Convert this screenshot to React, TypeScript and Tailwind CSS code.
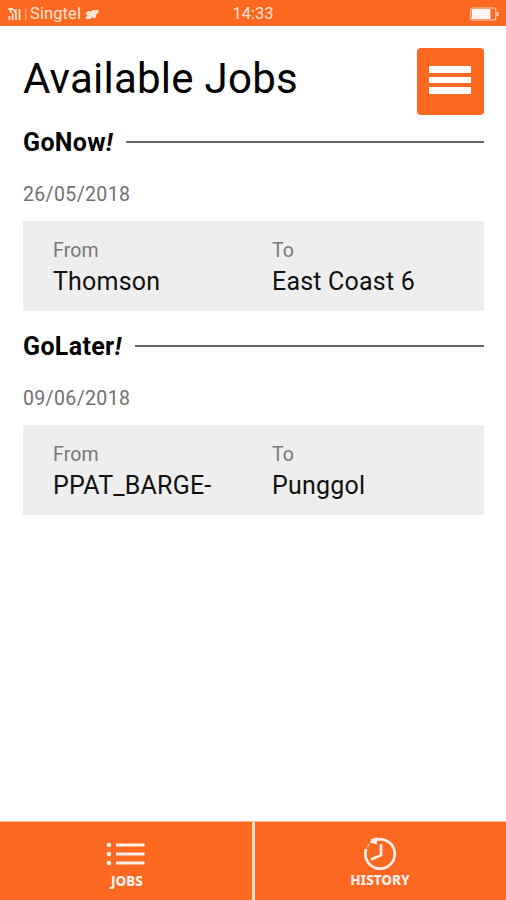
import React from "react";

type Job = {
  title: string;
  date: string;
  from: string;
  to: string;
};

const jobs: Job[] = [
  { title: "GoNow", date: "26/05/2018", from: "Thomson", to: "East Coast 6" },
  { title: "GoLater", date: "09/06/2018", from: "PPAT_BARGE-", to: "Punggol" },
];

const StatusBar: React.FC = () => (
  <div className="grid h-[26px] grid-cols-3 items-center bg-[#ff6820] pt-0.5 text-[16.5px] leading-6 text-[#ffe3d4]">
    <div className="flex items-center pl-2">
      <svg width="20" height="14" viewBox="0 0 20 14" fill="none" stroke="currentColor">
        <path d="M0.5 2h4.5M2.7 2v4M5.5 2.5l1.5 2 1.5-2M1.5 13V9M4.7 13V6.5M8 13V5M11.5 13V2" strokeWidth="1.8" />
        <path d="M17.8 1v12" strokeWidth="1" opacity="0.7" />
      </svg>
      <span className="ml-0.5 tracking-[0.1px]">Singtel</span>
      <svg className="ml-1" width="14" height="11" viewBox="0 0 14 11" fill="currentColor">
        <path d="M0.5 4l3-2 3 .5 1-1.5h6v2.5l-2 1.500-1 4H8L7 8l-1.500 2H1l-.5-2 2-1z" />
      </svg>
    </div>
    <span className="text-center">14:33</span>
    <div className="flex justify-end pr-[7px]">
      <svg width="29" height="14" viewBox="0 0 29 14" fill="none">
        <rect x="0.75" y="1" width="25" height="12" rx="2" stroke="#ffd5bf" strokeWidth="1.2" />
        <rect x="2" y="2" width="18.5" height="10" fill="#fff5f0" />
        <path d="M27.5 5v4" stroke="#ffd5bf" strokeWidth="2" />
      </svg>
    </div>
  </div>
);

const Place: React.FC<{ label: string; name: string }> = ({ label, name }) => (
  <div>
    <div className="text-[19.5px] leading-6 tracking-[0.15px] text-[#777]">{label}</div>
    <div className="mt-[3px] text-[25px] leading-8 tracking-[0.2px] text-[#111]">{name}</div>
  </div>
);

const JobSection: React.FC<{ job: Job }> = ({ job }) => (
  <section className="h-[204px]">
    <div className="flex h-8 items-center">
      <h2 className="pt-0.5 text-[25px] font-bold leading-8 tracking-[0.35px]">
        {job.title}
        <i>!</i>
      </h2>
      <div className="ml-[13px] h-0.5 flex-1 bg-[#666]" />
    </div>
    <div className="mt-[25px] text-[19.5px] leading-6 tracking-[0.35px] text-[#707070]">{job.date}</div>
    <div className="mt-3.5 grid h-[90px] grid-cols-[219px_1fr] bg-[#eee] pl-[30px] pt-[18px]">
      <Place label="From" name={job.from} />
      <Place label="To" name={job.to} />
    </div>
  </section>
);

const ListIcon: React.FC = () => (
  <svg width="40" height="24" viewBox="0 0 40 24" fill="#fff0e8">
    <circle cx="3" cy="3" r="2.3" />
    <circle cx="3" cy="12" r="2.3" />
    <circle cx="3" cy="21" r="2.3" />
    <path d="M10 1.5h28.500v3H10zM10 10.5h28.500v3H10zM10 19.5h28.500v3H10z" />
  </svg>
);

const HistoryIcon: React.FC = () => (
  <svg width="34" height="34" viewBox="0 0 34 34" fill="none" stroke="#fff0e8" strokeWidth="2.7">
    <path d="M11.5 3A14.7 14.7 0 1 1 2.2 12" />
    <path d="M17 7v11.2L7 22.5" />
    <path d="M13 0.2v7.200L6.200 5.500l1-3.500z" fill="#fff0e8" stroke="none" />
    <path d="M6 6.500L3 10.200" strokeWidth="1.5" opacity="0.55" />
  </svg>
);

const App: React.FC = () => (
  <div className="flex h-[900px] w-[506px] flex-col overflow-hidden bg-white font-[Roboto,sans-serif] text-black">
    <StatusBar />
    <main className="flex-1 px-[22px] pl-[23px] pt-[22px]">
      <header className="flex h-[78px] justify-between">
        <h1 className="text-[42px] leading-[62px] tracking-[0.25px]">Available Jobs</h1>
        <button className="flex h-[67px] w-[67px] flex-col items-start gap-1 rounded bg-[#ff6820] pl-3 pt-[18px]">
          <span className="h-[6.5px] w-[42px] bg-white" />
          <span className="h-[6.5px] w-[42px] bg-white" />
          <span className="h-[6.5px] w-[42px] bg-white" />
        </button>
      </header>
      {jobs.map((job) => (
        <JobSection key={job.title} job={job} />
      ))}
    </main>
    <nav className="flex h-[79px] gap-[3px] border-t border-[#ffb996] bg-[#ffdccb] font-['Noto_Sans',sans-serif] text-[13.5px] font-extrabold leading-4 text-[#fff0e8]">
      <div className="flex w-[252px] flex-col items-center bg-[#ff6820] pt-5">
        <ListIcon />
        <span className="mt-[7px] pl-0.5">JOBS</span>
      </div>
      <div className="flex flex-1 flex-col items-center bg-[#ff6820] pt-[15px]">
        <HistoryIcon />
        <span className="mt-px pr-px">HISTORY</span>
      </div>
    </nav>
  </div>
);

export default App;
